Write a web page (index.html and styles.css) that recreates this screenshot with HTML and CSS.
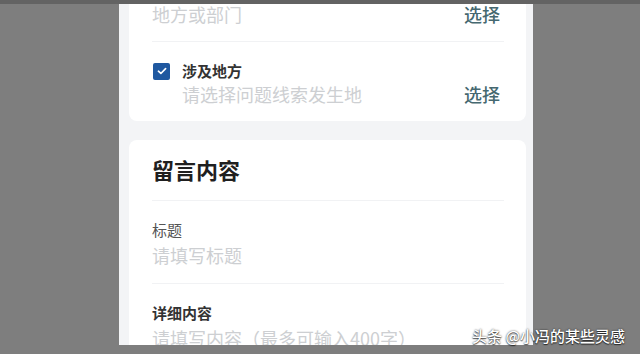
FILE: index.html
```html
<!DOCTYPE html>
<html lang="zh-CN">
<head>
<meta charset="utf-8">
<title>留言内容</title>
<link rel="stylesheet" href="styles.css">
</head>
<body>
<div class="frame-top"></div>
<main class="phone">
  <section class="card card-top">
    <div class="field field-first">
      <div class="field-row">
        <span class="placeholder">地方或部门</span>
        <span class="pick">选择</span>
      </div>
    </div>
    <div class="divider"></div>
    <div class="field">
      <div class="check-head">
        <span class="checkbox">
          <svg viewBox="0 0 16 16" width="12" height="12" aria-hidden="true"><path d="M3.2 8.3 L6.5 11.3 L12.8 4.8" fill="none" stroke="#fff" stroke-width="2.2" stroke-linecap="round" stroke-linejoin="round"/></svg>
        </span>
        <span class="label">涉及地方</span>
      </div>
      <div class="field-row indent">
        <span class="placeholder">请选择问题线索发生地</span>
        <span class="pick">选择</span>
      </div>
    </div>
  </section>

  <section class="card card-message">
    <h2 class="card-title">留言内容</h2>
    <div class="divider"></div>
    <div class="field">
      <div class="label label-light">标题</div>
      <div class="field-row">
        <span class="placeholder">请填写标题</span>
      </div>
    </div>
    <div class="divider"></div>
    <div class="field">
      <div class="label">详细内容</div>
      <div class="field-row">
        <span class="placeholder">请填写内容（最多可输入400字）</span>
      </div>
    </div>
  </section>
</main>
<div class="watermark">头条 @小冯的某些灵感</div>
</body>
</html>
```
FILE: styles.css
```css
* { box-sizing: border-box; }

html, body {
  margin: 0;
  padding: 0;
}

body {
  width: 640px;
  height: 354px;
  overflow: hidden;
  background: #7e7e7e;
  font-family: "Noto Sans CJK SC", "Noto Sans", sans-serif;
  position: relative;
}

.frame-top {
  height: 4px;
  background: #636363;
}

.phone {
  margin-left: 119px;
  width: 414px;
  height: 341px;
  background: #f3f4f6;
  overflow: hidden;
  padding: 0 7px 0 10px;
  display: flex;
  flex-direction: column;
  gap: 19px;
}

.card {
  background: #ffffff;
  border-radius: 8px;
  padding: 0 22px 0 23px;
  flex-shrink: 0;
}

.card-top {
  margin-top: -16px;
}

.divider {
  height: 1px;
  background: #f1f2f4;
}

.field {
  padding: 18px 0 16px;
}

.field-first {
  padding-top: 14px;
  padding-bottom: 15px;
}

.card-top .field:last-child {
  padding-bottom: 15px;
}

.field-row {
  display: flex;
  align-items: center;
  justify-content: space-between;
  margin-top: 2px;
}

.field-first .field-row,
.check-head + .field-row {
  margin-top: 0;
}

.indent {
  padding-left: 30px;
}

.placeholder {
  font-size: 18px;
  line-height: 24px;
  color: #cdcfd2;
}

.pick {
  font-size: 18px;
  line-height: 24px;
  color: #456870;
  font-weight: 500;
  margin-right: 4px;
}

.check-head {
  display: flex;
  align-items: center;
  gap: 12px;
}

.checkbox {
  width: 17px;
  height: 17px;
  margin-left: 1px;
  border-radius: 2px;
  background: #1f58a0;
  display: flex;
  align-items: center;
  justify-content: center;
}

.label {
  font-size: 15px;
  line-height: 22px;
  color: #333333;
  font-weight: 700;
}

.label-light {
  font-weight: 400;
  color: #555555;
}

.card-title {
  margin: 0;
  padding: 13px 0 15px;
  font-size: 22px;
  line-height: 32px;
  font-weight: 700;
  color: #1f1f1f;
}

.watermark {
  position: absolute;
  right: 15px;
  bottom: 9px;
  font-size: 15px;
  line-height: 18px;
  color: #ffffff;
  font-weight: 500;
  text-shadow: 0 0 2px rgba(0, 0, 0, 0.75), 0 1px 1px rgba(0, 0, 0, 0.6);
}
```
